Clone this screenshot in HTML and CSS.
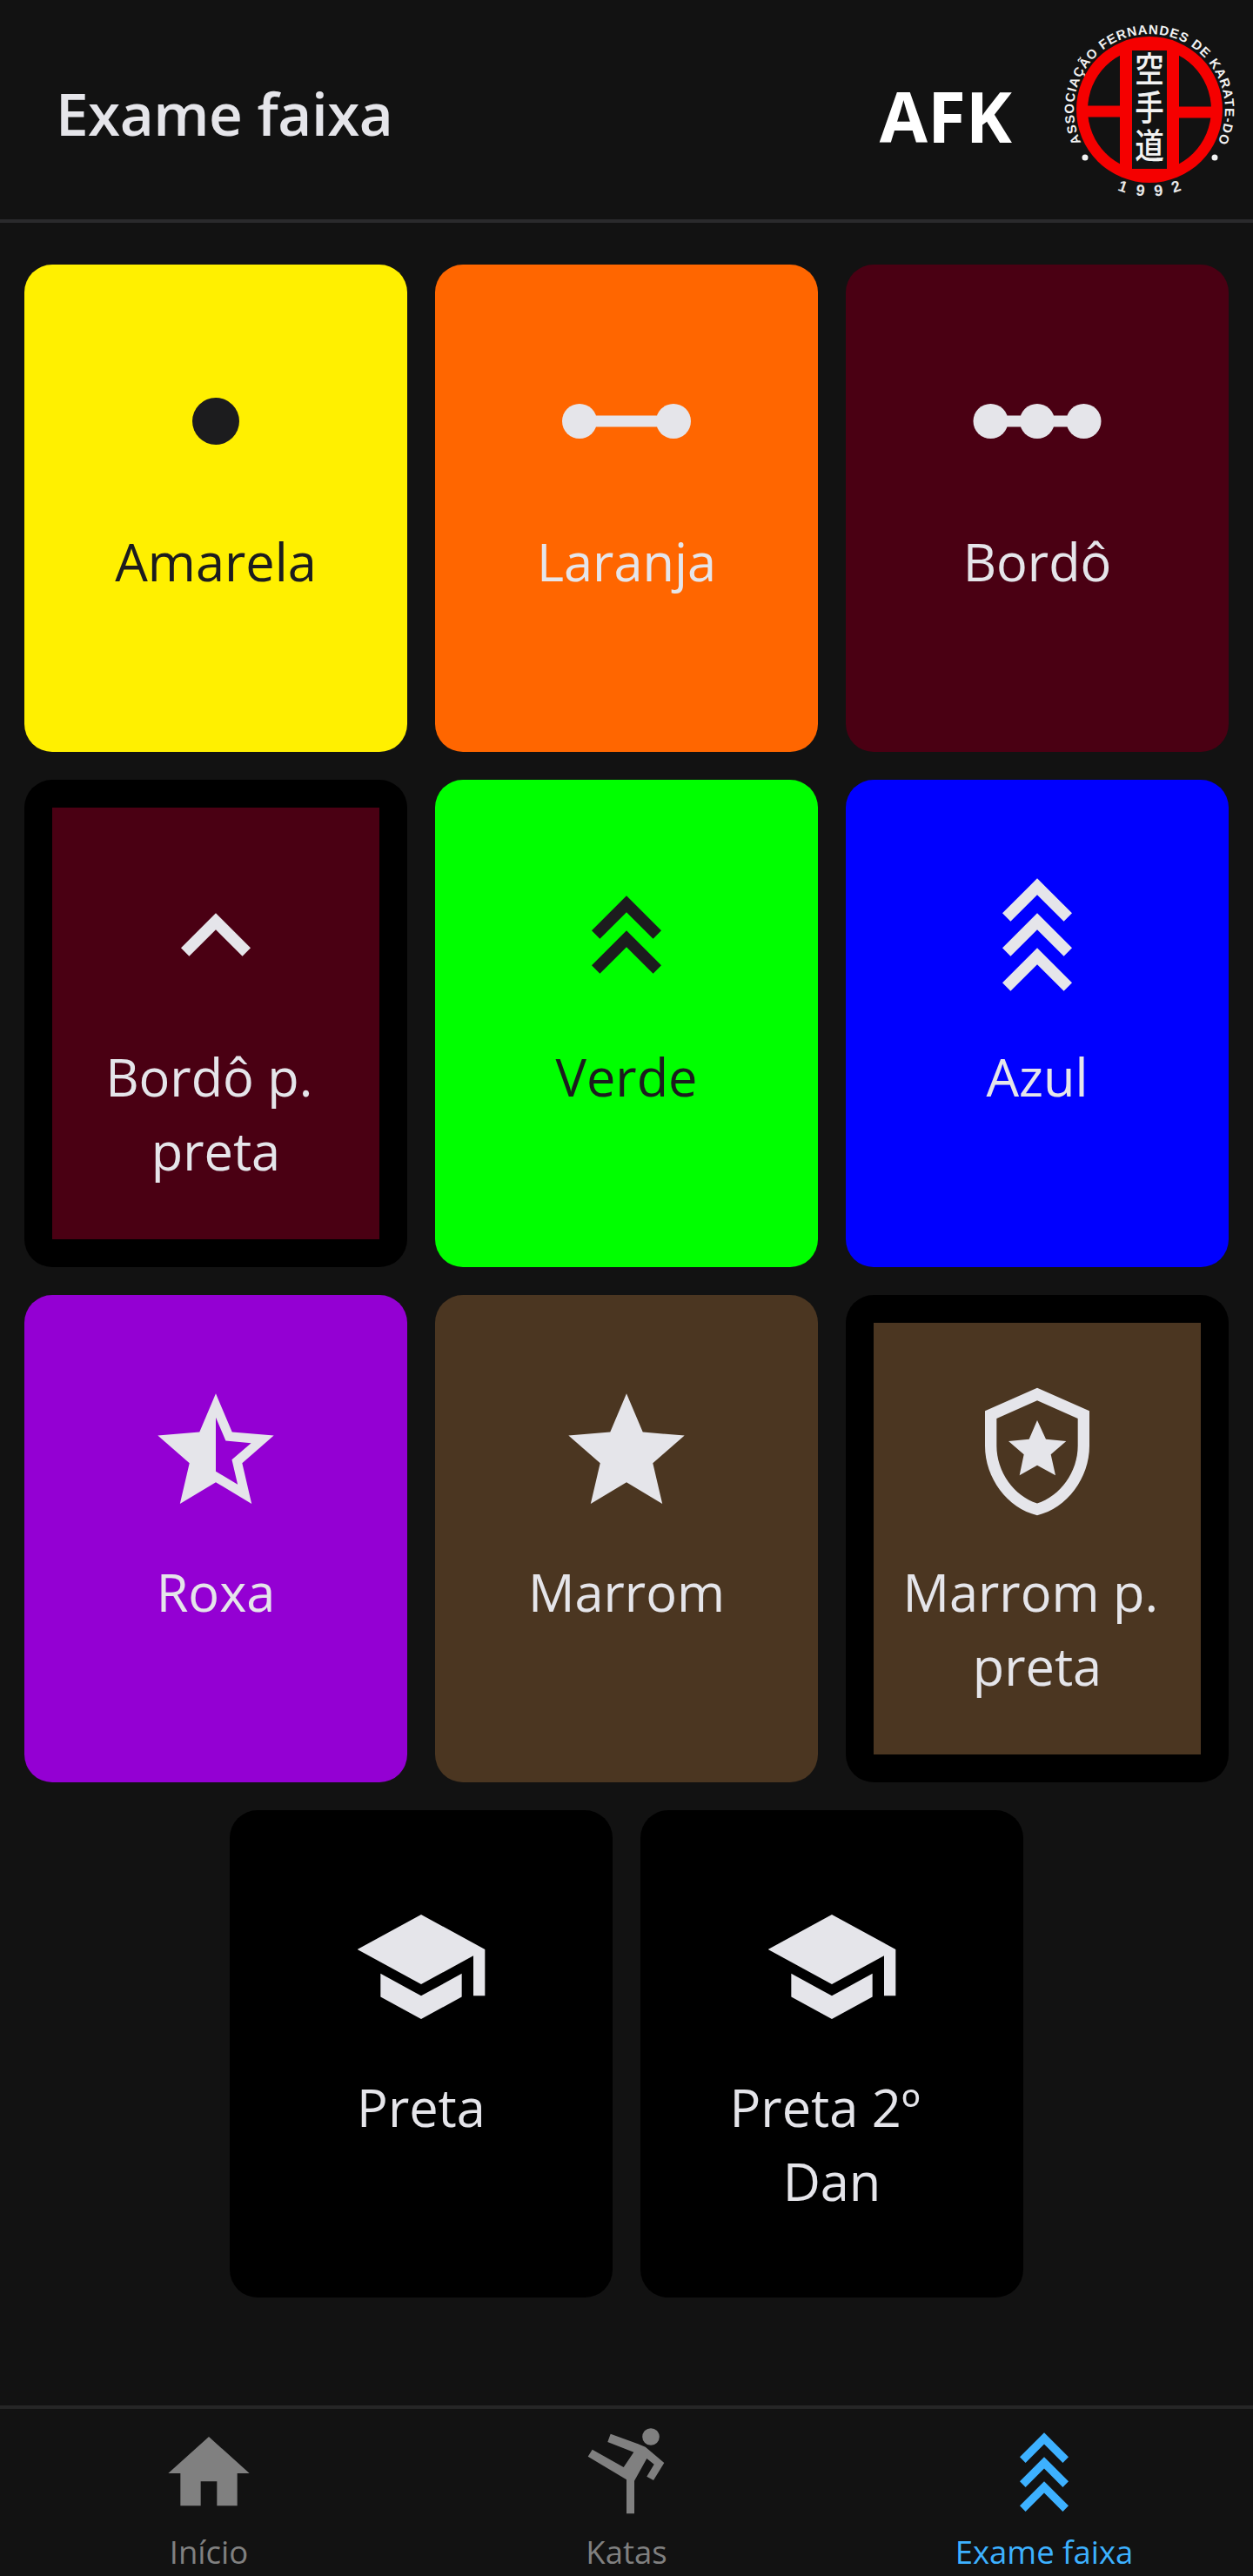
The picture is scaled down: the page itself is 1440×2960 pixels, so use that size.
FILE: index.html
```html
<!DOCTYPE html>
<html lang="pt-BR">
<head>
<meta charset="utf-8">
<title>Exame faixa</title>
<link rel="stylesheet" href="styles.css">
</head>
<body>
<div class="app">
  <header class="header">
    <h1 class="title">Exame faixa</h1>
    <div class="brand">
      <span class="afk">AFK</span>
      <svg class="logo" viewBox="0 0 200 200" aria-label="Logo">
        <defs>
          <clipPath id="inner"><circle cx="100" cy="100" r="71"/></clipPath>
          <path id="ringPath" d="M22.8 140.2A87 87 0 1 1 177.2 140.2"/>
          <path id="yearPath" d="M60 191.1A99.5 99.5 0 0 0 140 191.1"/>
        </defs>
        <circle class="logo-red" cx="100" cy="100" r="84"/>
        <g class="logo-dark" clip-path="url(#inner)">
          <rect x="29" y="29" width="37" height="66.5"/>
          <rect x="29" y="108.5" width="37" height="63"/>
          <rect x="134" y="29" width="37" height="67.5"/>
          <rect x="134" y="109.5" width="37" height="62"/>
          <rect x="80" y="32" width="40" height="136"/>
        </g>
        <text class="logo-ring"><textPath href="#ringPath" startOffset="50%" text-anchor="middle" textLength="350" lengthAdjust="spacing">ASSOCIAÇÃO FERNANDES DE KARATE-DO</textPath></text>
        <text class="logo-year"><textPath href="#yearPath" startOffset="50%" text-anchor="middle" textLength="76" lengthAdjust="spacing">1992</textPath></text>
        <circle class="logo-white" cx="26" cy="155" r="3.5"/>
        <circle class="logo-white" cx="175" cy="155" r="3.5"/>
        <g transform="translate(100 0) scale(.84 1)">
          <text class="logo-kanji" x="0" y="99">空手道</text>
        </g>
      </svg>
    </div>
  </header>

  <main class="grid">
    <a class="card card-yellow">
      <div class="card-body">
        <svg class="icon" viewBox="0 0 160 160"><circle cx="80" cy="80" r="27"/></svg>
        <span class="label">Amarela</span>
      </div>
    </a>
    <a class="card card-orange">
      <div class="card-body">
        <svg class="icon" viewBox="0 0 160 160"><circle cx="26" cy="80" r="20"/><rect x="26" y="73.5" width="108" height="13"/><circle cx="134" cy="80" r="20"/></svg>
        <span class="label">Laranja</span>
      </div>
    </a>
    <a class="card card-bordo">
      <div class="card-body">
        <svg class="icon" viewBox="0 0 160 160"><circle cx="26.5" cy="80" r="20"/><rect x="26" y="73.5" width="108" height="13"/><circle cx="80" cy="80" r="20"/><circle cx="133.5" cy="80" r="20"/></svg>
        <span class="label">Bordô</span>
      </div>
    </a>

    <a class="card card-belted">
      <div class="card-body card-bordo">
        <svg class="icon" viewBox="0 0 24 24"><path d="M12 8l6 6-1.41 1.41L12 10.83l-4.59 4.58L6 14z"/></svg>
        <span class="label">Bordô p.&nbsp;<br>preta</span>
      </div>
    </a>
    <a class="card card-green">
      <div class="card-body">
        <svg class="icon" viewBox="0 0 24 24"><path d="M12 5l6 6-1.41 1.41L12 7.83l-4.59 4.58L6 11z"/><path d="M12 11l6 6-1.41 1.41L12 13.83l-4.59 4.58L6 17z"/></svg>
        <span class="label">Verde</span>
      </div>
    </a>
    <a class="card card-blue">
      <div class="card-body">
        <svg class="icon" viewBox="0 0 24 24"><path d="M12 2l6 6-1.41 1.41L12 4.83 7.41 9.41 6 8z"/><path d="M12 8l6 6-1.41 1.41L12 10.83l-4.59 4.58L6 14z"/><path d="M12 14l6 6-1.41 1.41L12 16.83l-4.59 4.58L6 20z"/></svg>
        <span class="label">Azul</span>
      </div>
    </a>

    <a class="card card-purple">
      <div class="card-body">
        <svg class="icon" viewBox="0 0 24 24"><path fill-rule="evenodd" d="M22 9.24l-7.19-.62L12 2 9.19 8.63 2 9.24l5.46 4.73L5.82 21 12 17.27 18.18 21l-1.63-7.03L22 9.24zM12 15.4V6.1l1.71 4.04 4.38.38-3.32 2.88 1 4.28L12 15.4z"/></svg>
        <span class="label">Roxa</span>
      </div>
    </a>
    <a class="card card-brown">
      <div class="card-body">
        <svg class="icon" viewBox="0 0 24 24"><path d="M12 17.27L18.18 21l-1.64-7.03L22 9.24l-7.19-.61L12 2 9.19 8.63 2 9.24l5.46 4.73L5.82 21z"/></svg>
        <span class="label">Marrom</span>
      </div>
    </a>
    <a class="card card-belted">
      <div class="card-body card-brown">
        <svg class="icon" viewBox="0 0 24 24"><path fill-rule="evenodd" d="M12 1L3 5v6c0 5.55 3.84 10.74 9 12 5.16-1.26 9-6.45 9-12V5l-9-4zm7 10c0 4.52-3 8.69-7 9.93-4-1.24-7-5.43-7-9.93V6.3l7-3.11 7 3.11V11z"/><path d="M12 6.6l1.5 3.25 3.5.35-2.65 2.3.8 3.6L12 14.35 8.95 16.1l.75-3.6-2.65-2.3 3.55-.35z"/></svg>
        <span class="label">Marrom p.&nbsp;<br>preta</span>
      </div>
    </a>

    <a class="card card-black">
      <div class="card-body">
        <svg class="icon" viewBox="0 0 24 24"><path d="M5 13.18v4L12 21l7-3.82v-4L12 17l-7-3.82zM12 3L1 9l11 6 9-4.91V17h2V9L12 3z"/></svg>
        <span class="label">Preta</span>
      </div>
    </a>
    <a class="card card-black">
      <div class="card-body">
        <svg class="icon" viewBox="0 0 24 24"><path d="M5 13.18v4L12 21l7-3.82v-4L12 17l-7-3.82zM12 3L1 9l11 6 9-4.91V17h2V9L12 3z"/></svg>
        <span class="label">Preta 2º&nbsp;<br>Dan</span>
      </div>
    </a>
  </main>

  <nav class="tabs">
    <a class="tab">
      <svg class="tab-icon" viewBox="0 0 24 24"><path d="M10 20v-6h4v6h5v-8h3L12 3 2 12h3v8z"/></svg>
      <span class="tab-label">Início</span>
    </a>
    <a class="tab">
      <svg class="tab-icon" viewBox="0 0 112 112"><circle cx="84" cy="14" r="9.8"/><path d="M37.7 10.7L34.3 20 64.3 31.7 52.7 49 16.7 28.7 11.7 36.7 56 63.3V102.3H65V64.7L79.3 39 87.7 45.7 79.3 59.7 87 64 99.3 44 77.7 25.7 69.3 22.3z"/></svg>
      <span class="tab-label">Katas</span>
    </a>
    <a class="tab tab-active">
      <svg class="tab-icon" viewBox="0 0 24 24"><path d="M12 2l6 6-1.41 1.41L12 4.83 7.41 9.41 6 8z"/><path d="M12 8l6 6-1.41 1.41L12 10.83l-4.59 4.58L6 14z"/><path d="M12 14l6 6-1.41 1.41L12 16.83l-4.59 4.58L6 20z"/></svg>
      <span class="tab-label">Exame faixa</span>
    </a>
  </nav>
</div>
</body>
</html>
```

FILE: styles.css
```css
* { box-sizing: border-box; }
html, body { margin: 0; padding: 0; background: #121212; }
body { font-family: "Open Sans", "Noto Sans", sans-serif; color: #e5e5ea; }

.app { width: 1440px; height: 2960px; display: flex; flex-direction: column; overflow: hidden; }

.header {
  height: 256px;
  flex: none;
  border-bottom: 4px solid #2a2a2c;
  display: flex;
  align-items: center;
  justify-content: space-between;
  padding: 0 19px 0 64px;
}
.title { margin: 8px 0 0; font-size: 67.4px; font-weight: 600; line-height: 90px; color: #e5e5ea; letter-spacing: -.5px; }
.brand { display: flex; align-items: center; gap: 58px; }
.afk { margin-top: 14px; font-size: 80px; font-weight: 700; line-height: 108px; color: #fff; }
.logo { width: 200px; height: 200px; display: block; overflow: visible; }
.logo-red { fill: #f50000; }
.logo-dark { fill: #121212; }
.logo-white { fill: #f2f2f2; }
.logo-ring { font-family: "Liberation Sans", sans-serif; font-weight: 700; font-size: 15px; fill: #f2f2f2; }
.logo-year { font-family: "Liberation Sans", sans-serif; font-weight: 700; font-size: 18px; fill: #e8e8e8; }
.logo-kanji { font-family: "Noto Sans CJK JP", sans-serif; font-size: 40px; font-weight: 500; letter-spacing: 4px; writing-mode: vertical-rl; text-anchor: middle; fill: #f2f2f2; }

.grid {
  flex: 1;
  display: flex;
  flex-wrap: wrap;
  justify-content: center;
  align-content: flex-start;
  gap: 32px;
  padding: 48px 28px 0;
}
.card {
  width: 440px;
  height: 560px;
  border-radius: 32px;
  overflow: hidden;
  display: flex;
  color: #e5e5ea;
  fill: #e5e5ea;
}
.card-body {
  flex: 1;
  display: flex;
  flex-direction: column;
  align-items: center;
  padding-top: 100px;
}
.card-belted { background: #000; padding: 32px; }
.card-belted .card-body { padding-top: 68px; }

.card-yellow { background: #fff000; color: #1c1c1e; fill: #1c1c1e; }
.card-orange { background: #ff6600; }
.card-bordo { background: #4a0013; }
.card-green { background: #00ff00; color: #1c1c1e; fill: #1c1c1e; }
.card-blue { background: #0000ff; }
.card-purple { background: #9400d3; }
.card-brown { background: #4b3621; }
.card-black { background: #000; }

.icon { width: 160px; height: 160px; display: block; flex: none; }
.label { margin-top: 38px; font-size: 59.5px; line-height: 85px; text-align: center; }

.tabs {
  height: 196px;
  flex: none;
  border-top: 4px solid #262626;
  display: flex;
}
.tab {
  flex: 1;
  display: flex;
  flex-direction: column;
  align-items: center;
  padding-top: 18px;
  color: #808080;
  fill: #808080;
}
.tab-active { color: #3db1ff; fill: #3db1ff; }
.tab-icon { width: 112px; height: 112px; display: block; flex: none; }
.tab-label { font-size: 36.5px; line-height: 53px; margin-top: 8px; }
```
